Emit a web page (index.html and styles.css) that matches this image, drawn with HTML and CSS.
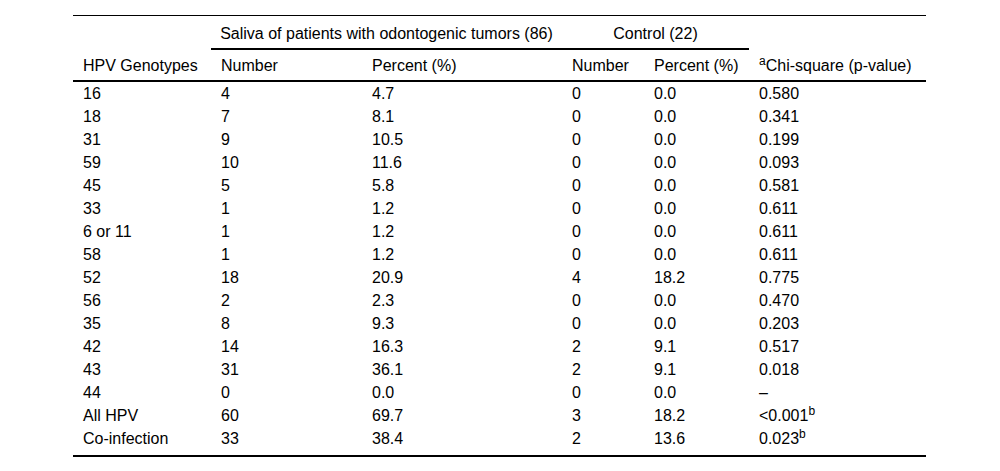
FILE: index.html
```html
<!DOCTYPE html>
<html lang="en">
<head>
<meta charset="utf-8">
<title>HPV genotypes</title>
<link rel="stylesheet" href="styles.css">
</head>
<body>
<div class="page">
<table class="data">
<colgroup>
<col class="c1"><col class="c2"><col class="c3"><col class="c4"><col class="c5"><col class="c6">
</colgroup>
<thead>
<tr class="h1">
<th rowspan="2" class="low">HPV Genotypes</th>
<th colspan="2" class="span">Saliva of patients with odontogenic tumors (86)</th>
<th colspan="2" class="span">Control (22)</th>
<th rowspan="2" class="low"><sup>a</sup>Chi-square (p-value)</th>
</tr>
<tr class="h2">
<th>Number</th>
<th>Percent (%)</th>
<th>Number</th>
<th>Percent (%)</th>
</tr>
</thead>
<tbody>
<tr><td>16</td><td>4</td><td>4.7</td><td>0</td><td>0.0</td><td>0.580</td></tr>
<tr><td>18</td><td>7</td><td>8.1</td><td>0</td><td>0.0</td><td>0.341</td></tr>
<tr><td>31</td><td>9</td><td>10.5</td><td>0</td><td>0.0</td><td>0.199</td></tr>
<tr><td>59</td><td>10</td><td>11.6</td><td>0</td><td>0.0</td><td>0.093</td></tr>
<tr><td>45</td><td>5</td><td>5.8</td><td>0</td><td>0.0</td><td>0.581</td></tr>
<tr><td>33</td><td>1</td><td>1.2</td><td>0</td><td>0.0</td><td>0.611</td></tr>
<tr><td>6 or 11</td><td>1</td><td>1.2</td><td>0</td><td>0.0</td><td>0.611</td></tr>
<tr><td>58</td><td>1</td><td>1.2</td><td>0</td><td>0.0</td><td>0.611</td></tr>
<tr><td>52</td><td>18</td><td>20.9</td><td>4</td><td>18.2</td><td>0.775</td></tr>
<tr><td>56</td><td>2</td><td>2.3</td><td>0</td><td>0.0</td><td>0.470</td></tr>
<tr><td>35</td><td>8</td><td>9.3</td><td>0</td><td>0.0</td><td>0.203</td></tr>
<tr><td>42</td><td>14</td><td>16.3</td><td>2</td><td>9.1</td><td>0.517</td></tr>
<tr><td>43</td><td>31</td><td>36.1</td><td>2</td><td>9.1</td><td>0.018</td></tr>
<tr><td>44</td><td>0</td><td>0.0</td><td>0</td><td>0.0</td><td>–</td></tr>
<tr><td>All HPV</td><td>60</td><td>69.7</td><td>3</td><td>18.2</td><td>&lt;0.001<sup>b</sup></td></tr>
<tr class="last"><td>Co-infection</td><td>33</td><td>38.4</td><td>2</td><td>13.6</td><td>0.023<sup>b</sup></td></tr>
</tbody>
</table>
</div>
</body>
</html>
```

FILE: styles.css
```css
html, body {
  margin: 0;
  padding: 0;
  background: #fff;
}

.page {
  padding: 15px 0 0 73px;
}

.data {
  width: 853px;
  table-layout: fixed;
  border-collapse: separate;
  border-spacing: 0;
  border-top: 1px solid #000;
  border-bottom: 2px solid #000;
  font-family: "Liberation Sans", Arial, sans-serif;
  font-size: 16px;
  line-height: 19px;
  color: #000;
}

.c1 { width: 138px; }
.c2 { width: 151px; }
.c3 { width: 200px; }
.c4 { width: 82px; }
.c5 { width: 105px; }
.c6 { width: 177px; }

.data th,
.data td {
  text-align: left;
  font-weight: normal;
  padding: 2px 0 2px 10px;
  white-space: nowrap;
}

.h1 th {
  padding-top: 8px;
  padding-bottom: 5px;
}

.h1 th.span {
  text-align: center;
  padding-left: 0;
  border-bottom: 2px solid #000;
}

.h1 th.low,
.h2 th {
  vertical-align: bottom;
  padding-top: 6px;
  padding-bottom: 5px;
  border-bottom: 2px solid #000;
}

.data tr.last td {
  padding-bottom: 7px;
}

.data sup {
  font-size: 12px;
  line-height: 0;
  vertical-align: 6px;
}
```
